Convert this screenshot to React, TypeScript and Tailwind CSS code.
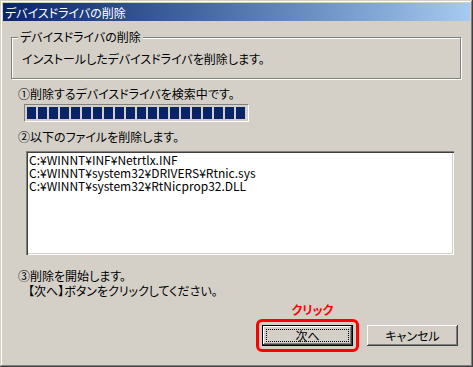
const files = [
  'C:¥WINNT¥INF¥Netrtlx.INF',
  'C:¥WINNT¥system32¥DRIVERS¥Rtnic.sys',
  'C:¥WINNT¥system32¥RtNicprop32.DLL',
];

const raised = 'shadow-[inset_-1px_-1px_0_#404040,inset_1px_1px_0_#ffffff,inset_-2px_-2px_0_#808080]';

export default function App() {
  return (
    <div className="w-[473px] h-[367px] bg-[#d4d0c8] p-[3px] text-[12px] leading-[13px] text-black font-['Noto_Sans_CJK_JP',sans-serif] [font-feature-settings:'palt'] shadow-[inset_-1px_-1px_0_#404040,inset_1px_1px_0_#d4d0c8,inset_-2px_-2px_0_#808080,inset_2px_2px_0_#ffffff] flex flex-col">
      <div className="h-[18px] shrink-0 bg-gradient-to-r from-[#0a246a] to-[#a6caf0] text-white flex items-center pl-[2px]">
        デバイスドライバの削除
      </div>

      <div className="flex flex-col pl-[8px] pr-[9px]">
        {/* group box */}
        <div className="relative mt-[16px] h-[42px] border border-[#808080] shadow-[1px_1px_0_#ffffff,inset_1px_1px_0_#ffffff] flex items-center pl-[10px]">
          <span className="absolute -top-[8px] left-[6px] bg-[#d4d0c8] px-[2px]">デバイスドライバの削除</span>
          <span className="pt-[1px]">インストールしたデバイスドライバを削除します。</span>
        </div>

        <div className="pl-[7px] mt-[8px]">①削除するデバイスドライバを検索中です。</div>
        <div className="ml-[13px] mt-[4px] w-[225px] h-[18px] border-t border-l border-[#808080] border-b border-r border-b-white border-r-white px-[2px] py-[2px] flex gap-[2px]">
          {Array.from({ length: 20 }).map((_, i) => (
            <div key={i} className="w-[9px] h-full bg-[#0a246a]" />
          ))}
        </div>

        <div className="pl-[7px] mt-[8px]">②以下のファイルを削除します。</div>
        <div className="ml-[15px] mt-[8px] w-[428px] h-[104px] bg-white shadow-[inset_1px_1px_0_#808080,inset_2px_2px_0_#404040,inset_-1px_-1px_0_#ffffff,inset_-2px_-2px_0_#d4d0c8] pt-[2px] pl-[3px] leading-[13px]">
          {files.map((f) => (
            <div key={f}>{f}</div>
          ))}
        </div>

        <div className="pl-[7px] mt-[13px] leading-[15px]">
          <div>③削除を開始します。</div>
          <div className="pl-[10px]">【次へ】ボタンをクリックしてください。</div>
        </div>

        <div className="mt-[6px] flex justify-end items-end gap-[8px] pr-[3px]">
          <div className="flex flex-col items-center">
            <span className="text-[#ff0000] font-bold leading-[12px] mb-[3px] ml-[10px]">クリック</span>
            <div className="border-[3px] border-[#ff0000] rounded-[6px] p-[3px]">
              <div className="w-[91px] h-[21px] bg-[#d4d0c8] border border-black shadow-[inset_-1px_-1px_0_#404040,inset_1px_1px_0_#ffffff,inset_-2px_-2px_0_#808080] p-[3px]">
                <div className="h-full border border-dotted border-black flex items-center justify-center">次へ</div>
              </div>
            </div>
          </div>
          <div className={`w-[91px] h-[21px] mb-[6px] bg-[#d4d0c8] ${raised} flex items-center justify-center`}>
            キャンセル
          </div>
        </div>
      </div>
    </div>
  );
}
